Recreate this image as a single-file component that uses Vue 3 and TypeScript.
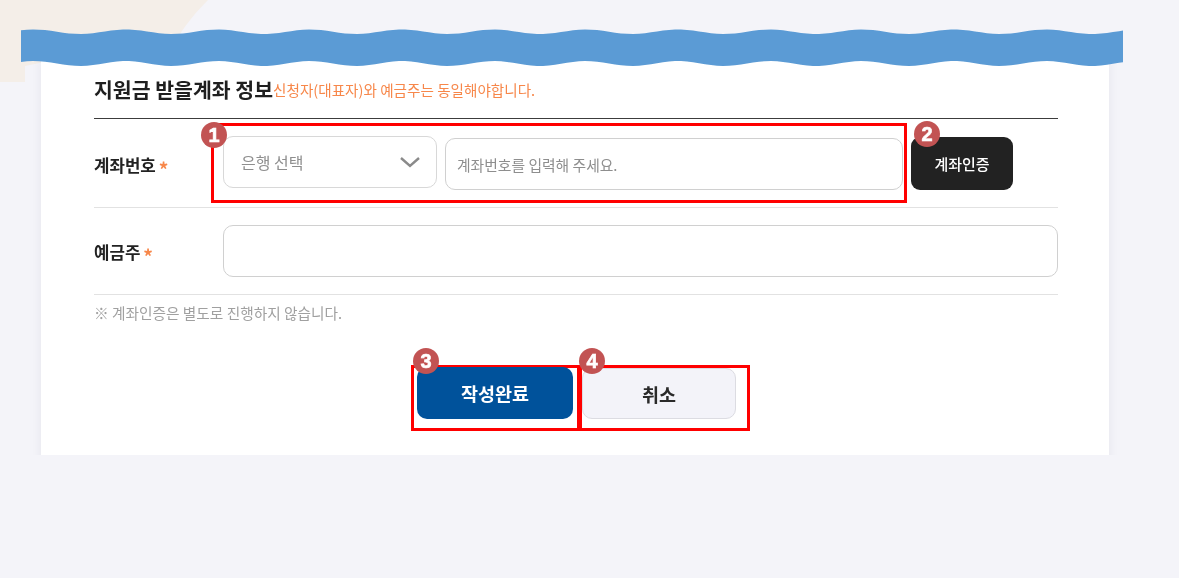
<script setup lang="ts">
const period = 92
const firstCrest = 34
const left = 21
const right = 1123
function edge(yCrest: number, yTrough: number, reverse: boolean): string {
  const pts: [number, number][] = []
  for (let x = left; x <= right + 5; x += 6) {
    const px = Math.min(x, right)
    const phase = ((px - firstCrest) / period) * Math.PI * 2
    const y = (yCrest + yTrough) / 2 - (Math.cos(phase) * (yTrough - yCrest)) / 2
    pts.push([px, Number(y.toFixed(2))])
  }
  if (reverse) pts.reverse()
  return pts.map((p) => `${p[0]} ${p[1]}`).join(' L')
}
const wavePath = `M${edge(29.5, 34, false)} L${edge(61, 66, true)} Z`
</script>

<template>
  <div class="page">
    <svg class="decor" width="1179" height="100" viewBox="0 0 1179 100">
      <path d="M0 0H208C196 12 188 22 180 34L25 66V82H0Z" fill="#f4eee8" />
    </svg>
    <div class="clip">
      <section class="card">
        <header class="head">
          <h2 class="title">지원금 받을계좌 정보</h2>
          <span class="hint">신청자(대표자)와 예금주는 동일해야합니다.</span>
        </header>

        <div class="row first">
          <div class="label">계좌번호<span class="req">*</span></div>
          <div class="mark account">
            <span class="badge b1">1</span>
            <div class="select">
              <span>은행 선택</span>
              <svg width="22" height="12" viewBox="0 0 22 12">
                <path d="M2 2L11 10L20 2" fill="none" stroke="#8a8a8a" stroke-width="2.4" />
              </svg>
            </div>
            <div class="input number">계좌번호를 입력해 주세요.</div>
          </div>
          <div class="verify">
            <span class="badge b2">2</span>
            <button class="verify-btn" type="button">계좌인증</button>
          </div>
        </div>

        <div class="row second">
          <div class="label">예금주<span class="req">*</span></div>
          <div class="input holder"></div>
        </div>

        <p class="note">※ 계좌인증은 별도로 진행하지 않습니다.</p>

        <div class="actions">
          <div class="mark submit-box">
            <span class="badge b3">3</span>
            <button class="submit" type="button">작성완료</button>
          </div>
          <div class="mark cancel-box">
            <span class="badge b4">4</span>
            <button class="cancel" type="button">취소</button>
          </div>
        </div>
      </section>
    </div>
    <svg class="wave" width="1179" height="80" viewBox="0 0 1179 80">
      <path :d="wavePath" fill="#5b9bd5" />
    </svg>
  </div>
</template>

<style>
html,
body {
  margin: 0;
  background: #f4f4f9;
}
</style>

<style scoped>
.page {
  position: relative;
  width: 1179px;
  height: 578px;
  overflow: hidden;
  box-sizing: border-box;
  padding: 60px 0 0 21px;
  background: #f4f4f9;
  font-family: "Noto Sans CJK KR", "Noto Sans", sans-serif;
  filter: blur(0.6px);
}
.decor,
.wave {
  position: absolute;
  left: 0;
  top: 0;
}
.clip {
  position: relative;
  box-sizing: border-box;
  width: 1108px;
  height: 395px;
  padding: 0 20px;
  overflow: hidden;
}
.card {
  box-sizing: border-box;
  width: 1068px;
  height: 420px;
  padding: 14px 51px 0 53px;
  background: #fff;
  box-shadow: 0 0 10px rgba(40, 40, 80, 0.07);
}
.head {
  display: flex;
  align-items: center;
  height: 30px;
  padding-bottom: 14px;
  border-bottom: 1.5px solid #3c3c3c;
}
.title {
  margin: 0;
  font-size: 20.5px;
  font-weight: 700;
  color: #1f1f1f;
  white-space: nowrap;
}
.hint {
  font-size: 14.6px;
  color: #f7874a;
  white-space: nowrap;
}
.row {
  display: flex;
  box-sizing: border-box;
  border-bottom: 1px solid #e2e2e2;
}
.first {
  height: 89px;
  padding-top: 4px;
}
.second {
  height: 87px;
  align-items: center;
}
.label {
  flex: none;
  width: 117px;
  font-size: 16.8px;
  font-weight: 700;
  color: #222;
  line-height: 24px;
}
.first .label {
  margin-top: 30px;
}
.second .label {
  width: 129px;
  padding-top: 3px;
}
.req {
  display: inline-block;
  margin-left: 3px;
  font-size: 19px;
  line-height: 1;
  vertical-align: -5px;
  color: #f7874a;
}
.mark {
  position: relative;
  box-sizing: border-box;
  border: 3px solid #f00;
}
.account {
  display: flex;
  flex: none;
  gap: 8px;
  width: 696px;
  height: 80px;
  padding: 10px 1px 0 9px;
}
.select {
  display: flex;
  align-items: center;
  justify-content: space-between;
  flex: none;
  box-sizing: border-box;
  width: 214px;
  height: 52px;
  padding: 0 15px 0 17px;
  border: 1px solid #d8d8d8;
  border-radius: 10px;
  font-size: 16px;
  color: #8e8e8e;
}
.input {
  box-sizing: border-box;
  border: 1px solid #d0d0d0;
  border-radius: 10px;
  background: #fff;
}
.number {
  flex: 1;
  height: 52px;
  margin-top: 2px;
  padding-left: 11px;
  font-size: 14.8px;
  line-height: 52px;
  color: #8e8e8e;
}
.holder {
  flex: 1;
  height: 52px;
}
.verify {
  position: relative;
  margin: 14px 0 0 4px;
}
.verify-btn {
  display: block;
  width: 102px;
  height: 53px;
  padding: 0;
  border: 0;
  border-radius: 9px;
  background: #222;
  color: #fff;
  font: 500 15px "Noto Sans CJK KR", sans-serif;
}
.note {
  margin: 8px 0 0;
  font-size: 14.7px;
  line-height: 20px;
  color: #a0a0a0;
}
.actions {
  display: flex;
  justify-content: center;
  margin-top: 42px;
  padding-left: 9px;
}
.submit-box {
  width: 169px;
  height: 66px;
  padding: 0 3px;
}
.cancel-box {
  width: 171px;
  height: 66px;
  margin-left: -1px;
}
.submit,
.cancel {
  display: block;
  padding: 0;
  border-radius: 10px;
  font-family: "Noto Sans CJK KR", sans-serif;
  font-weight: 700;
  font-size: 18.5px;
}
.submit {
  width: 156px;
  height: 52px;
  margin-top: -1px;
  border: 0;
  background: #00529b;
  color: #fff;
}
.cancel {
  width: 154px;
  height: 51px;
  border: 1px solid #dcdce2;
  background: #f3f3f9;
  color: #2a2a2a;
}
.badge {
  position: absolute;
  z-index: 2;
  display: flex;
  align-items: center;
  justify-content: center;
  width: 26px;
  height: 26px;
  border-radius: 50%;
  background: #c25353;
  color: #fff;
  font: 700 20px/1 "Liberation Sans", sans-serif;
  -webkit-text-stroke: 0.6px #fff;
}
.b1 {
  left: -13px;
  top: -4px;
}
.b2 {
  left: 3px;
  top: -16px;
}
.b3 {
  left: -1px;
  top: -20px;
}
.b4 {
  left: -3px;
  top: -20px;
}
</style>
